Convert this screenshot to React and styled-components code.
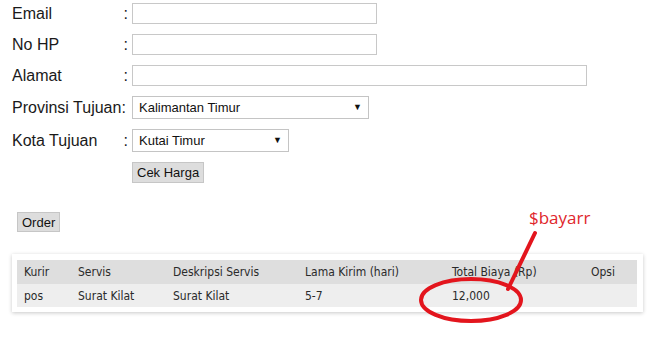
import React from "react"
import styled, { createGlobalStyle } from "styled-components"

const GlobalStyle = createGlobalStyle`
  html, body {
    margin: 0;
    padding: 0;
    background: #fff;
  }
  body {
    font-family: "Liberation Sans", Arial, sans-serif;
    color: #222;
  }
`

const Page = styled.div`
  position: relative;
  width: 651px;
  height: 351px;
  padding: 3px 0 0 12px;
  box-sizing: border-box;
  overflow: hidden;
`

const Form = styled.div`
  display: flex;
  flex-direction: column;
  gap: 10px;
`

const Row = styled.div`
  display: flex;
  align-items: center;
  height: ${(p) => p.h}px;
`

const Label = styled.div`
  width: 116px;
  display: flex;
  justify-content: space-between;
  font-size: 16px;
  color: #1a1a1a;
  margin-right: 4px;
  flex-shrink: 0;
  white-space: nowrap;
`

const Spacer = styled.div`
  width: 120px;
  flex-shrink: 0;
`

const TextInput = styled.input`
  width: ${(p) => p.w}px;
  height: 21px;
  box-sizing: border-box;
  border: 1px solid #c8c8c8;
  padding: 0 4px;
  margin: 0;
  outline: none;
`

const SelectWrap = styled.div`
  position: relative;
  width: ${(p) => p.w}px;
  height: 23px;
`

const Select = styled.select`
  appearance: none;
  -webkit-appearance: none;
  width: 100%;
  height: 100%;
  box-sizing: border-box;
  border: 1px solid #c4c4c4;
  background: #fff;
  padding: 0 0 0 6px;
  margin: 0;
  font-family: "Liberation Sans", Arial, sans-serif;
  font-size: 13px;
  color: #111;
  outline: none;
`

const Arrow = styled.span`
  position: absolute;
  right: 7px;
  top: 6px;
  font-size: 9px;
  color: #111;
  pointer-events: none;
`

const Button = styled.button`
  height: ${(p) => p.h || 21}px;
  box-sizing: border-box;
  padding: 0 4px;
  margin: 0;
  border: 1px solid #c6c6c6;
  background: #dddddd;
  font-family: "Liberation Sans", Arial, sans-serif;
  font-size: 13px;
  color: #111;
`

const OrderRow = styled.div`
  margin: 29px 0 0 5px;
  height: 20px;
  display: flex;
`

const Card = styled.div`
  margin-top: 22px;
  width: 631px;
  box-sizing: border-box;
  padding: 6px 6px 5px 5px;
  background: #fff;
  box-shadow: 0 1px 4px rgba(0, 0, 0, 0.22);
`

const Table = styled.table`
  width: 100%;
  border-collapse: collapse;
  table-layout: fixed;
  font-family: "DejaVu Sans Condensed", "DejaVu Sans", sans-serif;
  font-size: 12px;
  color: #2a2a2a;
`

const Th = styled.th`
  width: ${(p) => p.w}px;
  box-sizing: border-box;
  text-align: left;
  font-weight: normal;
  background: #dedede;
  height: 24px;
  padding: 0 0 0 7px;
  white-space: nowrap;
`

const Td = styled.td`
  background: #eeeeee;
  height: 23px;
  padding: 0 0 0 7px;
  white-space: nowrap;
`

const Annotation = styled.svg`
  position: absolute;
  left: 0;
  top: 0;
  pointer-events: none;
`

const Note = styled.div`
  position: absolute;
  left: 529px;
  top: 206px;
  font-family: "Open Sans", "Noto Sans", sans-serif;
  font-size: 17px;
  color: #e0262c;
`

const columns = [
  ["Kurir", 54],
  ["Servis", 95],
  ["Deskripsi Servis", 132],
  ["Lama Kirim (hari)", 147],
  ["Total Biaya (Rp)", 139],
  ["Opsi", 53],
]

const rows = [["pos", "Surat Kilat", "Surat Kilat", "5-7", "12,000", ""]]

export default function App() {
  return (
    <Page>
      <GlobalStyle />
      <Form>
        <Row h={21}>
          <Label><span>Email</span><span>:</span></Label>
          <TextInput w={245} />
        </Row>
        <Row h={21}>
          <Label><span>No HP</span><span>:</span></Label>
          <TextInput w={245} />
        </Row>
        <Row h={21}>
          <Label><span>Alamat</span><span>:</span></Label>
          <TextInput w={455} />
        </Row>
        <Row h={23}>
          <Label><span>Provinsi Tujuan:</span></Label>
          <SelectWrap w={237}>
            <Select defaultValue="kaltim">
              <option value="kaltim">Kalimantan Timur</option>
            </Select>
            <Arrow>▼</Arrow>
          </SelectWrap>
        </Row>
        <Row h={23}>
          <Label><span>Kota Tujuan</span><span>:</span></Label>
          <SelectWrap w={157}>
            <Select defaultValue="kutim">
              <option value="kutim">Kutai Timur</option>
            </Select>
            <Arrow>▼</Arrow>
          </SelectWrap>
        </Row>
        <Row h={21}>
          <Spacer />
          <Button>Cek Harga</Button>
        </Row>
      </Form>

      <OrderRow>
        <Button h={20}>Order</Button>
      </OrderRow>

      <Card>
        <Table>
          <thead>
            <tr>
              {columns.map(([name, w]) => (
                <Th key={name} w={w}>{name}</Th>
              ))}
            </tr>
          </thead>
          <tbody>
            {rows.map((r, i) => (
              <tr key={i}>
                {r.map((c, j) => (
                  <Td key={j}>{c}</Td>
                ))}
              </tr>
            ))}
          </tbody>
        </Table>
      </Card>

      <Note>$bayarr</Note>
      <Annotation width="651" height="351">
        <ellipse cx="471" cy="300" rx="50" ry="21" fill="none" stroke="#e3151d" strokeWidth="4" />
        <line x1="535" y1="233" x2="508" y2="289" stroke="#e3151d" strokeWidth="4" strokeLinecap="round" />
      </Annotation>
    </Page>
  )
}
